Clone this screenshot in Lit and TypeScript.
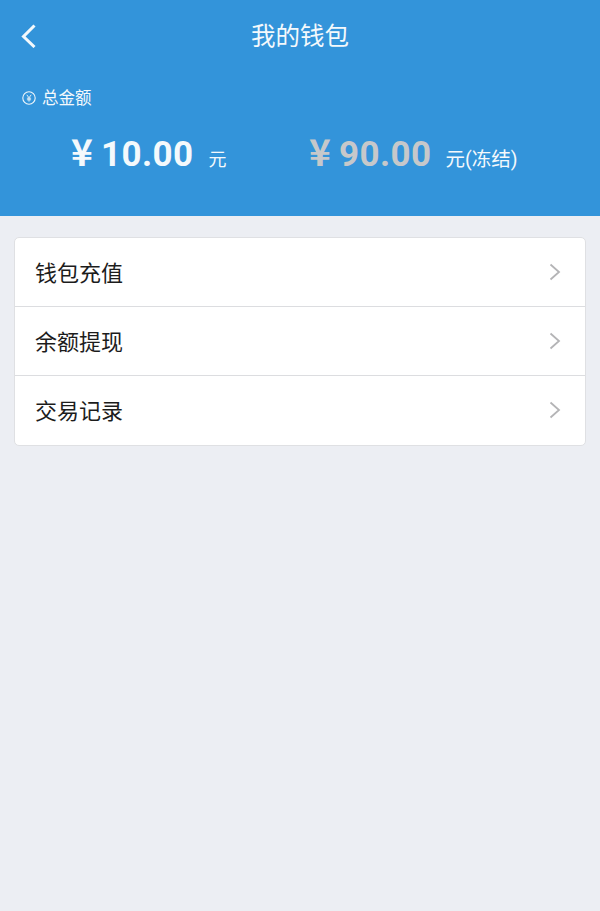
import { LitElement, html, css } from "lit";
import { customElement } from "lit/decorators.js";

const chevron = html`<svg class="chev" width="12" height="18" viewBox="0 0 12 18" fill="none"><path d="M1.5 1.5 L10 9 L1.5 16.5" stroke="#b4b4b6" stroke-width="1.8"/></svg>`;

@customElement("app-root")
export class AppRoot extends LitElement {
  static styles = css`
    :host {
      display: block;
      width: 600px;
      height: 911px;
      background: #eceef3;
      font-family: "Noto Sans CJK SC", "Roboto", sans-serif;
      overflow: hidden;
    }
    .header {
      height: 216px;
      background: #3394da;
      color: #f4f9fc;
      box-sizing: border-box;
      display: flex;
      flex-direction: column;
    }
    .nav {
      height: 74px;
      display: flex;
      align-items: center;
      justify-content: center;
      position: relative;
      font-size: 24.5px;
      padding-bottom: 5px;
      box-sizing: border-box;
    }
    .back {
      position: absolute;
      left: 21px;
      top: 24px;
    }
    .label {
      display: flex;
      align-items: center;
      gap: 6px;
      margin-left: 22px;
      margin-top: 11px;
      height: 24px;
      font-size: 16.5px;
    }
    .label svg { margin-top: 2px; }
    .amounts {
      display: flex;
      margin-top: 19px;
      height: 48px;
      align-items: center;
    }
    .amount {
      display: flex;
      align-items: baseline;
      font-family: "Roboto", "Noto Sans CJK SC", sans-serif;
    }
    .a1 { margin-left: 71px; width: 238px; }
    .value {
      font-size: 35px;
      font-weight: 700;
      line-height: 48px;
      letter-spacing: 0.4px;
      display: flex;
      align-items: baseline;
    }
    .yen {
      width: 30px;
      font-size: 37px;
      font-weight: 700;
      font-family: "Noto Sans CJK SC", sans-serif;
    }
    .frozen { color: #c6c8ca; }
    .unit {
      font-size: 18px;
      margin-left: 15px;
      font-family: "Roboto", "Noto Sans CJK SC", sans-serif;
    }
    .unit-frozen { font-size: 19.5px; margin-left: 14px; }
    .card {
      margin: 21px 14px 0;
      background: #fff;
      border: 1px solid #dfe0e3;
      border-radius: 5px;
    }
    .row {
      height: 69px;
      box-sizing: border-box;
      display: flex;
      align-items: center;
      justify-content: space-between;
      padding: 0 24px 3px 20px;
      font-size: 22px;
      color: #1c1c1c;
      border-top: 1px solid #dcdde0;
    }
    .row:first-child { border-top: none; height: 68px; }
    .row:last-child { height: 70px; }
    .chev { margin-top: 2px; }
  `;

  render() {
    return html`
      <div class="header">
        <div class="nav">
          <svg class="back" width="16" height="24" viewBox="0 0 16 24" fill="none"><path d="M13.5 1.5 L2.5 12.5 L13.5 23" stroke="#f4f9fc" stroke-width="3"/></svg>
          我的钱包
        </div>
        <div class="label">
          <svg width="14" height="14" viewBox="0 0 14 14" fill="none" stroke="#f0f7fb">
            <circle cx="7" cy="7" r="6.2" stroke-width="1.1"/>
            <path d="M4.8 3.8 L7 6.8 L9.2 3.8 M7 6.8 V10.6 M4.9 7.2 H9.1 M4.9 8.8 H9.1" stroke-width="0.9"/>
          </svg>
          总金额
        </div>
        <div class="amounts">
          <div class="amount a1">
            <span class="value"><span class="yen">¥</span>10.00</span>
            <span class="unit">元</span>
          </div>
          <div class="amount">
            <span class="value frozen"><span class="yen">¥</span>90.00</span>
            <span class="unit unit-frozen">元(冻结)</span>
          </div>
        </div>
      </div>
      <div class="card">
        <div class="row">钱包充值 ${chevron}</div>
        <div class="row">余额提现 ${chevron}</div>
        <div class="row">交易记录 ${chevron}</div>
      </div>
    `;
  }
}
